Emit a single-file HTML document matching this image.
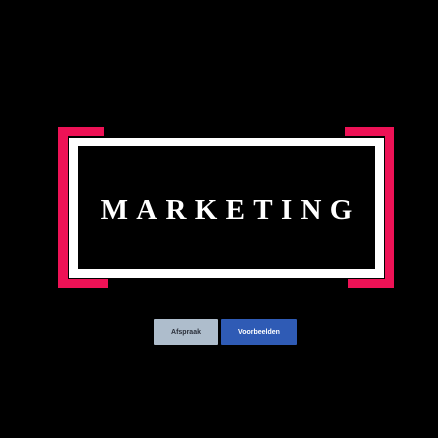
<!DOCTYPE html>
<html><head><style>
html,body{margin:0;padding:0;background:#000;width:438px;height:438px;overflow:hidden}
.a{position:absolute}
.p{background:#ee1256}
.t{position:absolute;left:78px;top:146px;width:297px;height:123px;display:flex;align-items:center;justify-content:center}
.t span{font-family:"Liberation Serif",serif;font-weight:bold;font-size:29px;letter-spacing:8.3px;color:#fff;margin-right:-8.3px;margin-top:6px}
.b{position:absolute;top:319px;height:26px;font-family:"Liberation Sans",sans-serif;font-weight:bold;font-size:7px;display:flex;align-items:center;justify-content:center;border-radius:1px}
</style></head><body>
<div class="a p" style="left:58px;top:127px;width:46px;height:9px"></div>
<div class="a p" style="left:58px;top:127px;width:10px;height:161px"></div>
<div class="a p" style="left:58px;top:279px;width:50px;height:9px"></div>
<div class="a p" style="left:345px;top:127px;width:49px;height:9px"></div>
<div class="a p" style="left:385px;top:127px;width:9px;height:161px"></div>
<div class="a p" style="left:348px;top:279px;width:46px;height:9px"></div>
<div class="a" style="left:69px;top:138px;width:315px;height:140px;background:#fff"></div>
<div class="a" style="left:78px;top:146px;width:297px;height:123px;background:#000"></div>
<div class="t"><span>MARKETING</span></div>
<div class="b" style="left:154px;width:64px;background:#aebdcc;color:#2a2f3a">Afspraak</div>
<div class="b" style="left:221px;width:76px;background:#2f5bb5;color:#fff">Voorbeelden</div>
</body></html>
